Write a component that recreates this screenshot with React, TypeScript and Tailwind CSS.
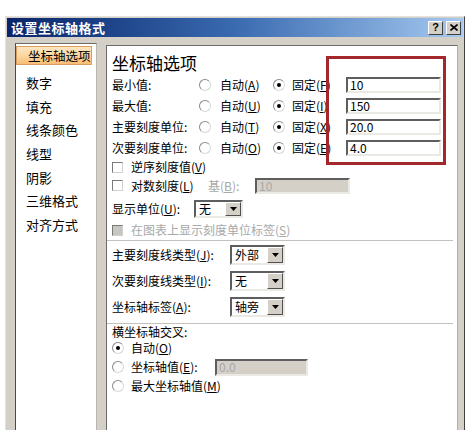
import React from "react";

const F = "font-['Noto_Sans_CJK_SC','Noto_Sans_CJK_JP',sans-serif]";

function Radio({ checked = false }: { checked?: boolean }) {
  return (
    <span className="relative inline-flex h-[12px] w-[12px] shrink-0 items-center justify-center rounded-full border border-t-[#8a8a8a] border-l-[#8a8a8a] border-b-[#d8d8d8] border-r-[#d8d8d8] bg-white">
      {checked && <span className="h-[4px] w-[4px] rounded-full bg-black" />}
    </span>
  );
}

function Check({ disabled = false }: { disabled?: boolean }) {
  return (
    <span
      className={
        "inline-block h-[11px] w-[11px] shrink-0 border border-t-[#7a7a7a] border-l-[#7a7a7a] border-b-[#d0d0d0] border-r-[#d0d0d0] " +
        (disabled ? "bg-[#c8c6c0]" : "bg-white")
      }
    />
  );
}

function TextBox({ value, w, h, disabled = false }: { value: string; w: string; h: string; disabled?: boolean }) {
  return (
    <div
      className={
        "flex items-center border-2 border-t-[#5e5e5e] border-l-[#5e5e5e] border-b-[#ebe9e4] border-r-[#ebe9e4] pl-[2px] text-[12px] leading-none " +
        w +
        " " +
        h +
        (disabled ? " bg-[#d4d0c8] text-[#a8a8a8]" : " bg-white text-black")
      }
    >
      {value}
    </div>
  );
}

function Select({ value, w, h }: { value: string; w: string; h: string }) {
  return (
    <div
      className={
        "flex items-stretch border-2 border-t-[#5e5e5e] border-l-[#5e5e5e] border-b-[#ebe9e4] border-r-[#ebe9e4] bg-white " + w + " " + h
      }
    >
      <div className="flex flex-1 items-center pl-[3px] text-[12px] leading-none text-black">{value}</div>
      <div className="flex w-[16px] items-center justify-center border border-t-white border-l-white border-b-[#505050] border-r-[#505050] bg-[#d4d0c8]">
        <svg width="7" height="4" viewBox="0 0 7 4">
          <path d="M0 0 H7 L3.5 4 Z" fill="#000" />
        </svg>
      </div>
    </div>
  );
}

function M({ c }: { c: string }) {
  return (
    <>
      (<span className="underline">{c}</span>)
    </>
  );
}

function ValueRow({ label, a, f, value }: { label: string; a: string; f: string; value: string }) {
  return (
    <div className="flex h-[21px] items-center">
      <span className="w-[87px]">{label}</span>
      <Radio />
      <span className="ml-[9px] w-[53px]">
        自动<M c={a} />
      </span>
      <Radio checked />
      <span className="ml-[7px] w-[54px]">
        固定<M c={f} />
      </span>
      <TextBox value={value} w="w-[95px]" h="h-[16px]" />
    </div>
  );
}

export default function App() {
  const items = ["数字", "填充", "线条颜色", "线型", "阴影", "三维格式", "对齐方式"];
  return (
    <div className={"relative h-[430px] w-[467px] overflow-hidden bg-white text-black " + F}>
      <div className="pl-[5px] pt-[16px]">
        <div className="h-[420px] w-[460px] border border-t-[#e4e2dc] border-l-[#e4e2dc] border-r-[#404040] border-b-[#404040] bg-[#d4d0c8] p-[1px]">
          {/* title bar */}
          <div className="flex h-[19px] items-center bg-gradient-to-r from-[#0a246a] via-[#3a6ab0] to-[#a6caf0] pl-[4px]">
            <span className="text-[13px] font-bold leading-none tracking-[0.5px] text-white">设置坐标轴格式</span>
            <div className="ml-auto mr-[2px] flex gap-[3px]">
              <div className="flex h-[14px] w-[15px] items-center justify-center border border-t-white border-l-white border-b-[#404040] border-r-[#404040] bg-[#d4d0c8] font-['Liberation_Sans',sans-serif] text-[11px] font-bold leading-none">
                ?
              </div>
              <div className="flex h-[14px] w-[15px] items-center justify-center border border-t-white border-l-white border-b-[#404040] border-r-[#404040] bg-[#d4d0c8]">
                <svg width="8" height="7" viewBox="0 0 8 7">
                  <path d="M0.5 0.5 L7.5 6.5 M7.5 0.5 L0.5 6.5" stroke="#000" strokeWidth="1.6" />
                </svg>
              </div>
            </div>
          </div>
          {/* body */}
          <div className="flex h-[400px] items-start pl-[8px] pt-[6px]">
            {/* left list */}
            <div className="h-[400px] w-[82px] border border-t-[#6a6a6a] border-l-[#4a4a4a] border-r-[#b8b6b0] border-b-[#b8b6b0] bg-white pt-[2px] text-[13px] leading-none">
              <div className="flex h-[19px] w-[76px] items-center border border-[#d8a060] bg-gradient-to-b from-[#fde6c4] via-[#fcd6a0] to-[#f8bd76] pl-[11px] pt-[2px] text-[12.5px]">
                坐标轴选项
              </div>
              <div className="h-[6px]" />
              {items.map((t) => (
                <div key={t} className="flex h-[23.6px] items-center pl-[10px]">
                  {t}
                </div>
              ))}
            </div>
            {/* right panel */}
            <div className="ml-[9px] mt-[2px] h-[400px] w-[352px] border border-t-[#6a6a6a] border-l-[#6a6a6a] border-r-[#b0aea8] border-b-[#b0aea8] bg-white pl-[5px] pt-[5px] text-[12px] leading-none">
              <div className="flex h-[23px] items-center text-[17px]">坐标轴选项</div>
              <ValueRow label="最小值:" a="A" f="F" value="10" />
              <ValueRow label="最大值:" a="U" f="I" value="150" />
              <ValueRow label="主要刻度单位:" a="T" f="X" value="20.0" />
              <ValueRow label="次要刻度单位:" a="O" f="E" value="4.0" />
              <div className="flex h-[18px] items-center">
                <Check />
                <span className="ml-[8px]">
                  逆序刻度值<M c="V" />
                </span>
              </div>
              <div className="flex h-[19px] items-center">
                <Check />
                <span className="ml-[8px] w-[77px]">
                  对数刻度<M c="L" />
                </span>
                <span className="w-[47px] text-[#a8a8a8]">
                  基<M c="B" />:
                </span>
                <TextBox value="10" w="w-[95px]" h="h-[16px]" disabled />
              </div>
              <div className="flex h-[27px] items-center">
                <span className="w-[82px]">
                  显示单位<M c="U" />:
                </span>
                <Select value="无" w="w-[49px]" h="h-[18px]" />
              </div>
              <div className="flex h-[16px] items-center">
                <Check disabled />
                <span className="ml-[8px] text-[#a8a8a8]">
                  在图表上显示刻度单位标签<M c="S" />
                </span>
              </div>
              <div className="-ml-[5px] mr-[4px] mt-[2px] h-[1px] bg-[#c4c2bc]" />
              <div className="mt-[1px]">
                <div className="flex h-[26px] items-center">
                  <span className="w-[118px]">
                    主要刻度线类型<M c="J" />:
                  </span>
                  <Select value="外部" w="w-[55px]" h="h-[20px]" />
                </div>
                <div className="flex h-[26px] items-center">
                  <span className="w-[118px]">
                    次要刻度线类型<M c="I" />:
                  </span>
                  <Select value="无" w="w-[55px]" h="h-[20px]" />
                </div>
                <div className="flex h-[26px] items-center">
                  <span className="w-[118px]">
                    坐标轴标签<M c="A" />:
                  </span>
                  <Select value="轴旁" w="w-[55px]" h="h-[20px]" />
                </div>
              </div>
              <div className="-ml-[5px] mr-[4px] mt-[3px] h-[1px] bg-[#c4c2bc]" />
              <div className="flex h-[16px] items-center">横坐标轴交叉:</div>
              <div className="flex h-[16px] items-center">
                <Radio checked />
                <span className="ml-[7px]">
                  自动<M c="O" />
                </span>
              </div>
              <div className="flex h-[22px] items-center">
                <Radio />
                <span className="ml-[7px] w-[84px]">
                  坐标轴值<M c="E" />:
                </span>
                <TextBox value="0.0" w="w-[93px]" h="h-[17px]" disabled />
              </div>
              <div className="flex h-[16px] items-center">
                <Radio />
                <span className="ml-[7px]">
                  最大坐标轴值<M c="M" />
                </span>
              </div>
            </div>
          </div>
        </div>
      </div>
      {/* red annotation box */}
      <div className="absolute left-[326px] top-[56px] h-[109px] w-[120px] border-[3px] border-[#a3272b]" />
    </div>
  );
}
